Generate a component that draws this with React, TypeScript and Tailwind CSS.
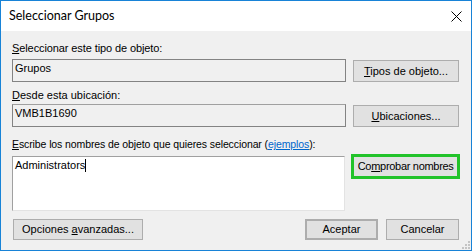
import React from "react";

const font = { fontFamily: '"Liberation Sans", Arial, sans-serif' };

function Btn({
  children,
  className = "",
}: {
  children: React.ReactNode;
  className?: string;
}) {
  return (
    <div
      className={
        "flex items-center justify-center bg-[#e1e1e1] border border-[#adadad] text-[11px] leading-[13px] text-black " +
        className
      }
    >
      {children}
    </div>
  );
}

function Grip() {
  const dots = [
    [6, 0],
    [3, 3],
    [6, 3],
    [0, 6],
    [3, 6],
    [6, 6],
  ];
  return (
    <svg width="8" height="8" className="absolute right-[1px] bottom-[1px]">
      {dots.map(([x, y]) => (
        <rect key={`${x}-${y}`} x={x} y={y} width="2" height="2" fill="#c4c4c4" />
      ))}
    </svg>
  );
}

export default function App() {
  return (
    <div
      className="relative w-[472px] h-[251px] border border-[#1883d7] bg-[#f0f0f0] flex flex-col text-black"
      style={font}
    >
      {/* Title bar */}
      <div className="h-[30px] bg-white flex items-center justify-between pl-[8px] pr-[9px]">
        <span className="text-[12.5px] leading-[16px] text-black" style={{ fontFamily: '"Lato", sans-serif' }}>
          Seleccionar Grupos
        </span>
        <svg width="11" height="11" viewBox="0 0 11 11">
          <path d="M0.5 0.5 L10.5 10.5 M10.5 0.5 L0.5 10.5" stroke="#000" strokeWidth="1" />
        </svg>
      </div>

      {/* Body */}
      <div className="flex-1 flex flex-col pl-[11px] pr-[11px] pt-[11px] text-[11px] leading-[13px]">
        <div className="tracking-[-0.1px]">
          <u>S</u>eleccionar este tipo de objeto:
        </div>
        <div className="flex items-start gap-[7px] mt-[4px]">
          <div className="w-[334px] h-[23px] border border-[#838383] bg-[#f0f0f0] pl-[2px] pt-[2px]">
            Grupos
          </div>
          <Btn className="w-[106px] h-[22px] mt-[1px]">
            <span>
              <u>T</u>ipos de objeto...
            </span>
          </Btn>
        </div>

        <div className="mt-[7px]">
          <u>D</u>esde esta ubicación:
        </div>
        <div className="flex items-start gap-[7px] mt-[2px]">
          <div className="w-[334px] h-[23px] border border-[#838383] border-t-[#a0a0a0] bg-[#f0f0f0] pl-[2px] pt-[2px]">
            VMB1B1690
          </div>
          <Btn className="w-[106px] h-[22px] mt-[1px]">
            <span>
              <u>U</u>bicaciones...
            </span>
          </Btn>
        </div>

        <div className="mt-[11px] text-[10.5px] tracking-[-0.1px]">
          <u>E</u>scribe los nombres de objeto que quieres seleccionar (
          <u className="text-[#0066cc]">ejemplos</u>):
        </div>
        <div className="flex items-start mt-[3px]">
          <div className="mt-[2px] w-[334px] h-[55px] bg-white border border-[#a0a0a0] border-r-[#e3e3e3] border-b-[#e3e3e3] pl-[2px] pt-[2px] flex items-start">
            <span>Administrators</span>
            <span className="inline-block w-[1px] h-[13px] bg-black" />
          </div>
          <div className="ml-[6px] w-[109px] h-[25px] border-[3px] border-[#22c32a] bg-[#e1e1e1] flex items-center justify-center">
            <span className="tracking-[-0.3px]">
              Co<u>m</u>probar nombres
            </span>
          </div>
        </div>

        <div className="flex items-start mt-[8px]">
          <Btn className="ml-[1px] w-[130px] h-[21px]">
            <span>
              Opciones <u>a</u>vanzadas...
            </span>
          </Btn>
          <div className="flex-1" />
          <Btn className="w-[73px] h-[21px] border-2 border-[#0078d7]">
            <span>Aceptar</span>
          </Btn>
          <Btn className="ml-[8px] mr-[1px] w-[73px] h-[21px]">
            <span>Cancelar</span>
          </Btn>
        </div>
      </div>
      <Grip />
    </div>
  );
}
